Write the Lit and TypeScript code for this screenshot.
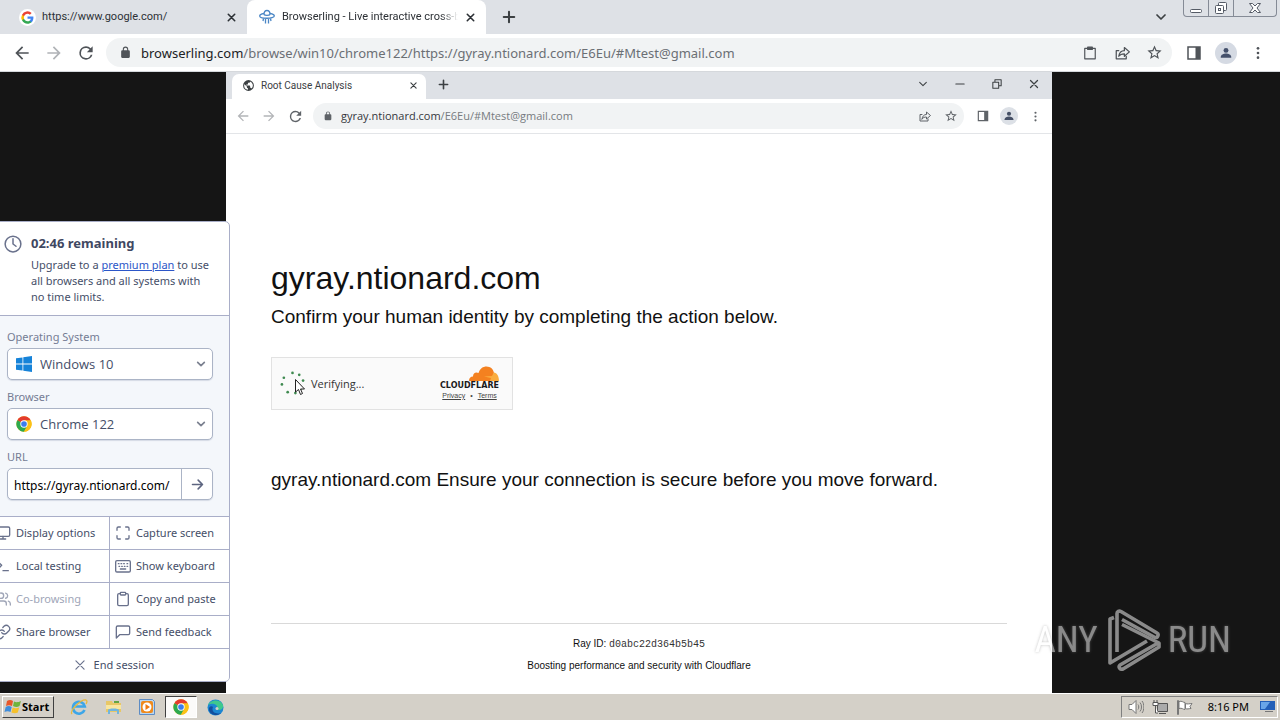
import { LitElement, html, css, svg, TemplateResult } from "lit";
import { customElement, property } from "lit/decorators.js";

const stroke = (body: unknown, size = 16, width = 2, box = 24) => html`<svg
  width=${size} height=${size} viewBox="0 0 ${box} ${box}" fill="none" stroke="currentColor"
  stroke-width=${width} stroke-linecap="round" stroke-linejoin="round" aria-hidden="true">${body}</svg>`;

const fill = (body: unknown, size = 16, box = 24) => html`<svg
  width=${size} height=${size} viewBox="0 0 ${box} ${box}" fill="currentColor" aria-hidden="true">${body}</svg>`;

const glyphs = {
  back: svg`<path d="M20 11H7.8l5.6-5.6L12 4l-8 8 8 8 1.4-1.4L7.8 13H20z"/>`,
  forward: svg`<path d="M12 4l-1.4 1.4 5.6 5.6H4v2h12.2l-5.6 5.6L12 20l8-8z"/>`,
  reload: svg`<path d="M17.65 6.35A7.96 7.96 0 0 0 12 4a8 8 0 1 0 7.73 10h-2.08A6 6 0 1 1 12 6c1.66 0 3.14.69 4.22 1.78L13 11h7V4z"/>`,
  lock: svg`<path d="M18 8h-1V6A5 5 0 0 0 7 6v2H6a2 2 0 0 0-2 2v10c0 1.1.9 2 2 2h12a2 2 0 0 0 2-2V10a2 2 0 0 0-2-2zM9 6a3 3 0 0 1 6 0v2H9z"/>`,
  star: svg`<path d="M22 9.24l-7.19-.62L12 2 9.19 8.63 2 9.24l5.46 4.73L5.82 21 12 17.27 18.18 21l-1.63-7.03zM12 15.4l-3.76 2.27 1-4.28-3.32-2.88 4.38-.38L12 6.1l1.71 4.04 4.38.38-3.32 2.88 1 4.28z"/>`,
  panel: svg`<path d="M3 3h18v18H3zM5 5v14h9V5z" fill-rule="evenodd"/>`,
  dots: svg`<circle cx="12" cy="5" r="2"/><circle cx="12" cy="12" r="2"/><circle cx="12" cy="19" r="2"/>`,
  person: svg`<circle cx="12" cy="7.5" r="4.2"/><path d="M3 19c0-4 5-6 9-6s9 2 9 6v1H3z"/>`,
  globe: svg`<path d="M12 2a10 10 0 1 0 0 20 10 10 0 0 0 0-20zM4 12c0-.8.1-1.500.3-2.200L9 14v1a2 2 0 0 0 2 2v2.900A8 8 0 0 1 4 12zm13.900 5.400A2 2 0 0 0 16 16h-1v-3c0-.6-.4-1-1-1H8v-2h2c.6 0 1-.4 1-1V7h2a2 2 0 0 0 2-2v-.4a8 8 0 0 1 2.900 12.800z"/>`,
};

const lines = {
  close: svg`<path d="M5 5l14 14M19 5L5 19"/>`,
  plus: svg`<path d="M12 3v18M3 12h18"/>`,
  down: svg`<path d="M4 8l8 8 8-8"/>`,
  share: svg`<path d="M6 9H2v13h16v-4"/><path d="M6 18c1-6 4-9 9-9V4l8 7-8 7v-4c-4 0-7 1-9 4z"/>`,
  clipboard: svg`<path d="M16 4h2a2 2 0 0 1 2 2v14a2 2 0 0 1-2 2H6a2 2 0 0 1-2-2V6a2 2 0 0 1 2-2h2"/><rect x="8" y="2" width="8" height="4" rx="1"/>`,
  paste: svg`<path d="M3 4h18v18H3z"/><path d="M8 2h8v4H8z" fill="currentColor"/>`,
  clock: svg`<circle cx="12" cy="12" r="10.500"/><path d="M12 5v7l4 3"/>`,
  monitor: svg`<rect x="2" y="3" width="20" height="14" rx="2"/><path d="M8 21h8M12 17v4"/>`,
  corners: svg`<path d="M8 3H5a2 2 0 0 0-2 2v3M21 8V5a2 2 0 0 0-2-2h-3M16 21h3a2 2 0 0 0 2-2v-3M3 16v3a2 2 0 0 0 2 2h3"/>`,
  terminal: svg`<path d="M4 17l6-6-6-6M12 19h8"/>`,
  keyboard: svg`<rect x="1" y="4" width="22" height="17" rx="2"/><path d="M5 8.500h1M9 8.500h1M13 8.500h1M18 8.500h1M6 12.500h1M10 12.500h1M14 12.500h1M18 12.500h1M8 16.500h8"/>`,
  users: svg`<path d="M17 21v-2a4 4 0 0 0-4-4H5a4 4 0 0 0-4 4v2"/><circle cx="9" cy="7" r="4"/><path d="M23 21v-2a4 4 0 0 0-3-3.870M16 3.130a4 4 0 0 1 0 7.750"/>`,
  link: svg`<path d="M10 13a5 5 0 0 0 7.540.540l3-3a5 5 0 0 0-7.070-7.070l-1.720 1.710"/><path d="M14 11a5 5 0 0 0-7.540-.540l-3 3a5 5 0 0 0 7.070 7.070l1.710-1.710"/>`,
  message: svg`<path d="M22 14a2 2 0 0 1-2 2H7l-5 5V5a2 2 0 0 1 2-2h16a2 2 0 0 1 2 2z"/>`,
  go: svg`<path d="M4 12h16M13 5l7 7-7 7"/>`,
};

const chromeLogo = (size: number) => html`<svg width=${size} height=${size} viewBox="0 0 48 48" aria-hidden="true">
  <circle cx="24" cy="24" r="23" fill="#fbc116"/>
  <path d="M24 24L4.100 12.500A23 23 0 0 1 43.900 12.500z" fill="#e33b2e"/>
  <path d="M24 24L4.100 12.500A23 23 0 0 0 24 47l10-18z" fill="#2da94f"/>
  <path d="M24 12.500h19.900A23 23 0 0 1 24 47l10-18z" fill="#fbc116"/>
  <circle cx="24" cy="24" r="11" fill="#fff"/><circle cx="24" cy="24" r="8.500" fill="#3b7ded"/></svg>`;

const windowsLogo = html`<svg width="16" height="16" viewBox="0 0 16 16" fill="#1683d9" aria-hidden="true">
  <path d="M0 2.300L6.500 1.400v6.100H0zM7.300 1.300L16 0v7.500H7.300zM0 8.400h6.500v6.200L0 13.700zM7.300 8.400H16V16l-8.700-1.300z"/></svg>`;

const googleLogo = html`<svg width="17" height="17" viewBox="0 0 28 28" aria-hidden="true">
  <circle cx="14" cy="14" r="14" fill="#fff"/>
  <g transform="translate(3 3) scale(.46)">
  <path fill="#4285f4" d="M45.100 24.500c0-1.600-.1-3.100-.4-4.500H24v8.500h11.800c-.5 2.800-2 5.100-4.400 6.700v5.500h7.100c4.200-3.800 6.600-9.500 6.600-16.200z"/>
  <path fill="#34a853" d="M24 46c5.900 0 10.900-2 14.500-5.300l-7.100-5.500c-2 1.300-4.500 2.100-7.400 2.100-5.700 0-10.500-3.900-12.300-9H4.300v5.700A22 22 0 0 0 24 46z"/>
  <path fill="#fbbc05" d="M11.700 28.200a13 13 0 0 1 0-8.400v-5.700H4.300a22 22 0 0 0 0 19.800z"/>
  <path fill="#ea4335" d="M24 10.700c3.200 0 6.100 1.100 8.400 3.300l6.300-6.300A22 22 0 0 0 4.300 14.100l7.400 5.700c1.800-5.200 6.600-9.100 12.300-9.100z"/></g></svg>`;

const ufoLogo = html`<svg width="16" height="16" viewBox="0 0 16 16" fill="none" stroke="#4a86c5" stroke-width="1.300" aria-hidden="true">
  <path d="M5 5.500C5 2.500 6 1.500 8 1.500s3 1 3 4M5 5.500c1 1.200 5 1.200 6 0"/><path d="M5 4.500C2 5 .7 6 .7 7c0 3 14.600 3 14.600 0 0-1-1.300-2-4.300-2.500"/>
  <path d="M4.500 9.500L4 12M6.500 10v4.500M9.500 10v4.500M11.500 9.500l.5 2.500"/></svg>`;

const toolIcon = (name: keyof typeof lines) => stroke(lines[name], 16, 2);

@customElement("pick-list")
class PickList extends LitElement {
  @property() label = "";
  @property() value = "";
  @property({ attribute: false }) logo: TemplateResult | null = null;

  static styles = css`
    :host { display: block; min-width: 0; }
    .label { display: block; color: #757c94; font-size: 11px; line-height: 16px; margin-bottom: 3px; }
    .box {
      display: flex; align-items: center; height: 32px; box-sizing: border-box;
      padding: 0 6px 0 8px; border: 1px solid #abb4c6; border-radius: 5px; background: #fff;
      box-shadow: 0 1px 1px #d5dae5;
    }
    .select {
      flex: 1; min-width: 0; appearance: none; border: 0; outline: 0; background: none;
      padding: 0 8px; margin: 0; font: 13px/20px "Open Sans", sans-serif; color: #454e68;
    }
    svg { flex: none; display: block; color: #7b8190; }
  `;

  render() {
    return html`<label class="label" for="choice">${this.label}</label>
      <div class="box">${this.logo}
        <select class="select" id="choice"><option>${this.value}</option></select>
        ${stroke(lines.down, 10, 4)}
      </div>`;
  }
}

@customElement("session-panel")
class SessionPanel extends LitElement {
  static styles = css`
    :host {
      display: block; box-sizing: border-box; background: #fff; color: #454e68;
      border: 1px solid #a9aec8; border-radius: 5px; overflow: hidden;
      font: 11px/16px "Noto Sans", sans-serif;
    }
    svg { display: block; flex: none; }
    .notice { display: flex; gap: 9px; padding: 11px 8px 10px 14px; border-bottom: 1px solid #a9aec8; }
    .notice svg { color: #69718c; margin-top: 2px; }
    .title { margin: 0 0 4px; font-size: 13px; line-height: 20px; font-weight: 700; color: #3f4862; }
    .copy { margin: 0; }
    .copy a { color: #2c56c8; }
    .fields { display: grid; grid-template-columns: minmax(0, 1fr); gap: 9px; padding: 13px 16px 16px 17px; background: #f4f7fb; }
    .label { display: block; color: #757c94; margin-bottom: 3px; }
    .url { display: flex; height: 32px; box-sizing: border-box; border: 1px solid #abb4c6; border-radius: 5px; background: #fff; box-shadow: 0 1px 1px #d5dae5; }
    .address { flex: 1; min-width: 0; border: 0; outline: 0; background: none; padding: 3px 6px 0; font: 12px/20px "Noto Sans", sans-serif; color: #000; }
    .go { width: 31px; display: grid; place-items: center; padding: 0; border: 0; border-left: 1px solid #abb4c6; background: none; color: #5d6580; }
    .tools { display: grid; grid-template-columns: 119px 1fr; gap: 1px; background: #a9aec8; border-top: 1px solid #a9aec8; }
    .tool {
      display: flex; align-items: center; gap: 5px; height: 32px; padding: 0 5px; border: 0;
      background: #fff; font: inherit; color: #454e68; white-space: nowrap;
    }
    .tool svg { color: #69718c; }
    .tool:disabled, .tool:disabled svg { color: #a0a6b8; }
    .wide { grid-column: 1 / -1; justify-content: center; gap: 7px; padding-left: 13px; }
  `;

  tools: [keyof typeof lines, string, boolean?][] = [
    ["monitor", "Display options"], ["corners", "Capture screen"],
    ["terminal", "Local testing"], ["keyboard", "Show keyboard"],
    ["users", "Co-browsing", true], ["clipboard", "Copy and paste"],
    ["link", "Share browser"], ["message", "Send feedback"],
  ];

  render() {
    return html`
      <div class="notice">${stroke(lines.clock, 18, 2)}
        <div>
          <h2 class="title">02:46 remaining</h2>
          <p class="copy">Upgrade to a <a href="#plan">premium plan</a> to use<br>all browsers and all systems with<br>no time limits.</p>
        </div>
      </div>
      <div class="fields">
        <pick-list label="Operating System" value="Windows 10" .logo=${windowsLogo}></pick-list>
        <pick-list label="Browser" value="Chrome 122" .logo=${chromeLogo(16)}></pick-list>
        <div>
          <label class="label" for="url">URL</label>
          <div class="url">
            <input class="address" id="url" value="https://gyray.ntionard.com/">
            <button class="go" aria-label="Go">${stroke(lines.go, 15, 2.500)}</button>
          </div>
        </div>
      </div>
      <div class="tools">
        ${this.tools.map(([icon, text, off]) => html`<button class="tool" ?disabled=${off}>${toolIcon(icon)}${text}</button>`)}
        <button class="tool wide">${stroke(lines.close, 14, 2)}<span>End session</span></button>
      </div>`;
  }
}

@customElement("remote-browser")
class RemoteBrowser extends LitElement {
  static styles = css`
    :host { display: flex; flex-direction: column; background: #fff; color: #111; font-family: "Liberation Sans", Arial, sans-serif; }
    svg { display: block; flex: none; }
    button { padding: 0; border: 0; background: none; color: inherit; display: grid; place-items: center; }
    .strip { display: flex; align-items: center; height: 27px; background: #dee1e6; color: #3c4043; padding-left: 6px; }
    .tab { display: flex; align-items: center; gap: 6px; box-sizing: border-box; width: 194px; height: 25px; align-self: end; padding: 0 8px 2px 10px; background: #fff; border-radius: 7px 7px 0 0; font: 10px/16px Roboto, sans-serif; }
    .name { flex: 1; white-space: nowrap; }
    .add, .win { margin-bottom: 3px; }
    .add { width: 35px; }
    .spacer { flex: 1; }
    .win { width: 37px; }
    .bar { display: flex; align-items: center; height: 34px; color: #5f6368; border-bottom: 1px solid #e3e5e8; padding: 0 4px; }
    .nav { width: 26px; }
    .dim { color: #b3b5b8; }
    .omni { flex: 1; display: flex; align-items: center; height: 26px; padding: 0 0 0 10px; margin: 0 6px 0 5px; border-radius: 13px; background: #f1f3f4; }
    .where { flex: 1; margin-left: 8px; font: 11px/16px "Open Sans", sans-serif; color: #777b80; white-space: nowrap; }
    .host { color: #35383c; }
    .face { width: 18px; height: 18px; border-radius: 9px; background: #dce0e6; color: #465066; margin: 0 4px; }
    .page { flex: 1; display: flex; flex-direction: column; padding: 122px 45px 0; }
    .title { margin: 0; font-size: 32px; line-height: 44px; font-weight: 400; }
    .text { margin: 0; font-size: 19px; line-height: 34px; }
    .check { display: flex; align-items: center; box-sizing: border-box; width: 242px; height: 53px; margin: 23px 0 53px; padding: 0 13px 0 8px; gap: 6px; border: 1px solid #e2e2e2; background: #fafafa; }
    .state { flex: 1; font: 11px/16px "Open Sans", sans-serif; color: #333; }
    .brand { display: grid; justify-items: center; }
    .mark { justify-self: end; }
    .word { font: 700 8px/9px "DejaVu Sans", sans-serif; color: #1b1b1b; }
    .links { display: flex; gap: 5px; font: 7px/12px "Liberation Sans", sans-serif; color: #444; }
    .links a { color: inherit; }
    .foot { margin-top: auto; border-top: 1px solid #d9d9d9; padding: 9px 0 17px; text-align: center; font-size: 10px; line-height: 21px; }
    .code { font-family: "Liberation Mono", monospace; color: #333; }
  `;

  render() {
    const ring = [[13, 2], [20, 4], [24, 10], [4, 7], [2, 14], [8, 22], [16, 23], [22, 18]];
    return html`
      <div class="strip">
        <div class="tab">${fill(glyphs.globe, 13)}<span class="name">Root Cause Analysis</span>
          <button aria-label="Close tab">${stroke(lines.close, 9, 3)}</button></div>
        <button class="add" aria-label="New tab">${stroke(lines.plus, 11, 3.500)}</button>
        <span class="spacer"></span>
        <button class="win" aria-label="Tab search">${stroke(lines.down, 10, 2.500)}</button>
        <button class="win" aria-label="Minimize">${stroke(svg`<path d="M2 12h20"/>`, 10, 2.500)}</button>
        <button class="win" aria-label="Restore">${stroke(svg`<path d="M2 8h14v14H2zM7 8V2h15v14h-6"/>`, 10, 2.500)}</button>
        <button class="win" aria-label="Close">${stroke(lines.close, 12, 2.500)}</button>
      </div>
      <div class="bar">
        <button class="nav dim" aria-label="Back">${fill(glyphs.back, 16)}</button>
        <button class="nav dim" aria-label="Forward">${fill(glyphs.forward, 16)}</button>
        <button class="nav" aria-label="Reload">${fill(glyphs.reload, 17)}</button>
        <div class="omni">${fill(glyphs.lock, 10)}
          <span class="where"><span class="host">gyray.ntionard.com</span>/E6Eu/#Mtest@gmail.com</span>
          <button class="nav" aria-label="Share">${stroke(lines.share, 12, 2)}</button>
          <button class="nav" aria-label="Bookmark">${fill(glyphs.star, 14)}</button>
        </div>
        <button class="nav" aria-label="Side panel">${fill(glyphs.panel, 14)}</button>
        <button class="face" aria-label="Profile">${fill(glyphs.person, 12)}</button>
        <button class="nav" aria-label="Menu">${fill(glyphs.dots, 13)}</button>
      </div>
      <main class="page">
        <h1 class="title">gyray.ntionard.com</h1>
        <p class="text">Confirm your human identity by completing the action below.</p>
        <div class="check">
          <svg width="25" height="25" viewBox="0 0 26 26" fill="#3f8a50" aria-hidden="true">
            ${ring.map(([x, y]) => svg`<circle cx=${x} cy=${y} r="1.400"/>`)}</svg>
          <span class="state">Verifying...</span>
          <div class="brand">
            <svg class="mark" width="30" height="15" viewBox="0 0 30 15" aria-hidden="true">
              <path fill="#f48120" d="M0 15c0-3 1.500-4.500 4-4.500C4 7 7 5.500 9.500 7 11 2.500 14 .5 17.500.5c4 0 7 2.800 7.500 6.500L22 15z"/>
              <path fill="#faad3f" d="M21 15l1-3-7-1.500 8-.5 1.800-3.500C28 7 30 10 30 15z"/></svg>
            <span class="word">CLOUDFLARE</span>
            <span class="links"><a href="#privacy">Privacy</a><span>•</span><a href="#terms">Terms</a></span>
          </div>
        </div>
        <p class="text">gyray.ntionard.com Ensure your connection is secure before you move forward.</p>
        <footer class="foot">
          <div>Ray ID: <span class="code">d0abc22d364b5b45</span></div>
          <div>Boosting performance and security with Cloudflare</div>
        </footer>
      </main>`;
  }
}

@customElement("task-bar")
class TaskBar extends LitElement {
  static styles = css`
    :host { display: flex; align-items: center; height: 27px; box-sizing: border-box; padding: 0 2px; background: #d4d0c8; border-top: 1px solid #fff; font: 11px/16px "Noto Sans", sans-serif; color: #000; }
    svg { display: block; flex: none; }
    button { padding: 0; border: 0; background: none; display: grid; place-items: center; width: 34px; height: 22px; }
    .start { display: flex; align-items: center; gap: 0; width: 52px; padding: 0 1px; border: 1px solid; border-color: #fff #404040 #404040 #fff; font: 700 11px/16px "Open Sans", sans-serif; color: #000; }
    .apps { display: flex; flex: 1; margin-left: 8px; }
    .on { width: 32px; margin: 0 1px; border: 1px solid; border-color: #404040 #fff #fff #404040; background: #fbfaf9; }
    .tray { display: flex; align-items: center; gap: 8px; height: 22px; box-sizing: border-box; padding: 0 1px 0 6px; border: 1px solid; border-color: #808080 #fff #fff #808080; }
    .time { margin: 0 3px 0 7px; white-space: nowrap; }
  `;

  render() {
    return html`
      <button class="start">
        <svg width="18" height="16" viewBox="0 0 18 16" aria-hidden="true">
          <path fill="#e8572a" d="M3 2c2-1.500 4-1.500 6 0L8 7C6 6 4 6 2 7z"/><path fill="#6fb43c" d="M10 2.500c2 1 4 1 7-.5l-1.500 5c-2 1.200-4 1.200-6.500 0z"/>
          <path fill="#3f8ddb" d="M1.700 8c2-1.200 4-1.200 6 0l-1.200 5c-2-1-4-1-6 0z"/><path fill="#f6c12c" d="M8.700 8.500c2 1 4 1 6.500 0l-1.400 5c-2 1-4 1-6.400 0z"/></svg>Start</button>
      <div class="apps">
        <button aria-label="Internet Explorer"><svg width="18" height="18" viewBox="0 0 18 18" fill="none" aria-hidden="true">
          <path d="M14.500 12a6 6 0 1 1 .3-3.500H5" stroke="#3da6e8" stroke-width="2.600"/><path d="M2 16C-1 13 11 1 16 2c1.500.5 1 2.500 0 4" stroke="#e9b93a" stroke-width="1.300"/></svg></button>
        <button aria-label="Explorer"><svg width="17" height="16" viewBox="0 0 17 16" aria-hidden="true">
          <path fill="#e8c766" d="M1 2h6l1 2h8v9H1z"/><path fill="#f8e6a0" d="M1 6h15v4H1z"/><path fill="#72b5dd" d="M3 15v-4c0-2 11-2 11 0v4h-2v-3H5v3z"/><path fill="#62a544" d="M9 2h5v2H9z"/></svg></button>
        <button aria-label="Media Player"><svg width="16" height="16" viewBox="0 0 16 16" aria-hidden="true">
          <path fill="#b9d7f2" stroke="#5d8cc4" d="M.5.5h13l2 2v13H.5z"/><rect x="2" y="2" width="12" height="12" rx="2" fill="#ef8a1d"/><circle cx="8" cy="8" r="4.500" fill="#fff"/><path fill="#ef7a10" d="M6.500 5l4.500 3-4.500 3z"/></svg></button>
        <button class="on" aria-label="Chrome">${chromeLogo(16)}</button>
        <button aria-label="Edge"><svg width="17" height="17" viewBox="0 0 17 17" aria-hidden="true">
          <circle cx="8.500" cy="8.500" r="8" fill="#1c86d2"/><path fill="#3fc98d" d="M1 6C3 1 13-1 16 6c1 4-3 6-6 4.500C12 6 6 3 1 6z"/><path fill="#144e9d" d="M6 8c-2 4 2 8 8 6-4 4-13 2-12-5 1-2 3-2 4-1z"/><circle cx="10" cy="9.500" r="1.500" fill="#d4d0c8"/></svg></button>
      </div>
      <div class="tray">
        <svg width="16" height="16" viewBox="0 0 16 16" fill="#fff" stroke="#777" aria-hidden="true">
          <path d="M1 5.500h3l4-4v13l-4-4H1z"/><path fill="none" d="M10 5.500c1 1 1 4 0 5M12 3.500c2 2 2 7 0 9M14 2c2.500 3 2.500 9 0 12"/></svg>
        <svg width="16" height="16" viewBox="0 0 16 16" fill="#aaa" stroke="#555" aria-hidden="true">
          <path d="M5.500 4.500h10v8h-10zM7 14.500h7"/><path fill="#fff" d="M1 3.500h5v3H1zM2 1v2M5 1v2M3.500 7v7H6"/></svg>
        <svg width="17" height="16" viewBox="0 0 17 16" fill="#fff" stroke="#777" aria-hidden="true">
          <path d="M1.500 1.500h1v14h-1zM3 2.500c3-1 4 1 6 1v7c-2 0-3-2-6-1zM9.500 4.500c2 1 4 0 6.500 0l-2 3 1 2c-2 0-4 1-5.500 0z"/></svg>
        <span class="time">8:16 PM</span>
        <svg width="16" height="14" viewBox="0 0 16 14" aria-hidden="true"><path fill="#235fb8" d="M0 1h15v9H0z"/><path fill="#69a5e8" d="M1 2h9L5 9H1z"/><path fill="#f0f0ea" stroke="#777" d="M5 11.500h8"/></svg>
      </div>`;
  }
}

@customElement("app-root")
class AppRoot extends LitElement {
  static styles = css`
    :host { display: flex; flex-direction: column; min-height: 100vh; position: relative; overflow: hidden; background: #fff; font: 12px/16px "Noto Sans", sans-serif; color: #3c4043; }
    svg { display: block; flex: none; }
    button { padding: 0; border: 0; background: none; color: inherit; display: grid; place-items: center; }
    .strip { display: flex; align-items: center; height: 34px; background: #dee1e6; }
    .tab { display: flex; align-items: center; box-sizing: border-box; gap: 6px; width: 247px; height: 34px; padding: 0 10px 0 19px; font: 11px/16px Roboto, sans-serif; color: #2c3035; }
    .active { width: 239px; padding: 0 10px 0 12px; gap: 7px; background: #fff; border-radius: 8px 8px 0 0; }
    .name { flex: 1; min-width: 0; overflow: hidden; white-space: nowrap; }
    .active .name { mask-image: linear-gradient(to right, #000 90%, transparent); }
    .add { width: 46px; }
    .spacer { flex: 1; }
    .search { width: 44px; }
    .frame { display: flex; align-self: start; height: 17px; box-sizing: border-box; margin-right: 3px; border: 1px solid #858b96; border-top: 0; border-radius: 0 0 4px 4px; color: #555b66; }
    .frame button { width: 25px; border-right: 1px solid #858b96; }
    .frame .last { width: 42px; border: 0; }
    .bar { display: flex; align-items: center; height: 37px; padding: 0 6px; color: #4f5358; border-bottom: 1px solid #d5d8dc; }
    .nav { width: 32px; }
    .dim { color: #b0b3b7; }
    .omni { flex: 1; display: flex; align-items: center; height: 29px; padding: 0 2px 0 13px; margin: 0 6px 0 4px; border-radius: 15px; background: #f1f3f4; }
    .where { flex: 1; margin-left: 9px; font-size: 13px; line-height: 20px; color: #6b6f74; white-space: nowrap; }
    .host { color: #202124; }
    .face { width: 22px; height: 22px; border-radius: 11px; background: #d5dae3; color: #44506b; margin: 0 5px; }
    .stage { flex: 1; display: flex; padding: 0 228px 0 226px; background: #151515; }
    .remote { flex: 1; }
    .panel { position: absolute; left: -11px; top: 221px; width: 241px; }
    .cursor { position: absolute; left: 295px; top: 379px; }
    .mark { position: absolute; right: 49px; bottom: 49px; display: flex; align-items: center; gap: 6px; color: #fff; opacity: .5; font: 37px/60px "Roboto Condensed", "Liberation Sans Narrow", "DejaVu Sans Condensed", sans-serif; text-shadow: 0 0 3px #888; }
  `;

  render() {
    return html`
      <div class="strip">
        <div class="tab">${googleLogo}<span class="name">https://www.google.com/</span>
          <button aria-label="Close tab">${stroke(lines.close, 11, 3.500)}</button></div>
        <div class="tab active">${ufoLogo}<span class="name">Browserling - Live interactive cross-b</span>
          <button aria-label="Close tab">${stroke(lines.close, 11, 3.500)}</button></div>
        <button class="add" aria-label="New tab">${stroke(lines.plus, 14, 3.500)}</button>
        <span class="spacer"></span>
        <button class="search" aria-label="Tab search">${stroke(lines.down, 12, 3.500)}</button>
        <div class="frame">
          <button aria-label="Minimize"><svg width="14" height="14" viewBox="0 0 14 14" fill="#fff" stroke="currentColor"><rect x="1.500" y="8.500" width="11" height="3" rx="1"/></svg></button>
          <button aria-label="Restore"><svg width="14" height="14" viewBox="0 0 14 14" fill="#fff" stroke="currentColor"><rect x="4.500" y="1.500" width="8" height="8" rx="1"/><rect x="1.500" y="4.500" width="8" height="8" rx="1"/><rect x="4.500" y="7.500" width="2" height="2"/></svg></button>
          <button class="last" aria-label="Close"><svg width="14" height="14" viewBox="0 0 14 14" fill="#fff" stroke="currentColor"><path d="M1.500 2.500h3L7 5l2.500-2.500h3L9 7l3.500 4.500h-3L7 9l-2.500 2.500h-3L5 7z"/></svg></button>
        </div>
      </div>
      <div class="bar">
        <button class="nav" aria-label="Back">${fill(glyphs.back, 20)}</button>
        <button class="nav dim" aria-label="Forward">${fill(glyphs.forward, 20)}</button>
        <button class="nav" aria-label="Reload">${fill(glyphs.reload, 20)}</button>
        <div class="omni">${fill(glyphs.lock, 13)}
          <span class="where"><span class="host">browserling.com</span>/browse/win10/chrome122/https://gyray.ntionard.com/E6Eu/#Mtest@gmail.com</span>
          <button class="nav" aria-label="Clipboard">${stroke(lines.paste, 14, 2)}</button>
          <button class="nav" aria-label="Share">${stroke(lines.share, 15, 2)}</button>
          <button class="nav" aria-label="Bookmark">${fill(glyphs.star, 17)}</button>
        </div>
        <button class="nav" aria-label="Side panel">${fill(glyphs.panel, 18)}</button>
        <button class="face" aria-label="Profile">${fill(glyphs.person, 14)}</button>
        <button class="nav" aria-label="Menu">${fill(glyphs.dots, 16)}</button>
      </div>
      <div class="stage"><remote-browser class="remote"></remote-browser></div>
      <task-bar></task-bar>
      <session-panel class="panel"></session-panel>
      <svg class="cursor" width="10" height="17" viewBox="0 0 10 17" fill="#fff" stroke="#222" aria-hidden="true"><path d="M.5.5v12.500l3-2.500 2 5 2-1-2-4.500h4z"/></svg>
      <div class="mark"><span>ANY</span>
        <svg width="58" height="62" viewBox="0 0 58 62" fill="none" stroke="currentColor" stroke-width="3.600" stroke-linejoin="round" aria-hidden="true">
          <path d="M10 8.500L6 10v44l37-22"/><path d="M13 43V4.500c0-2 2-3 4-2L53 24c2 1 1 5-2 4.500L18 10.500"/><path d="M18 15.500l37 18.500v4L19 60c-3 1-5-2-3-4l38-22"/></svg>
        <span>RUN</span></div>`;
  }
}
